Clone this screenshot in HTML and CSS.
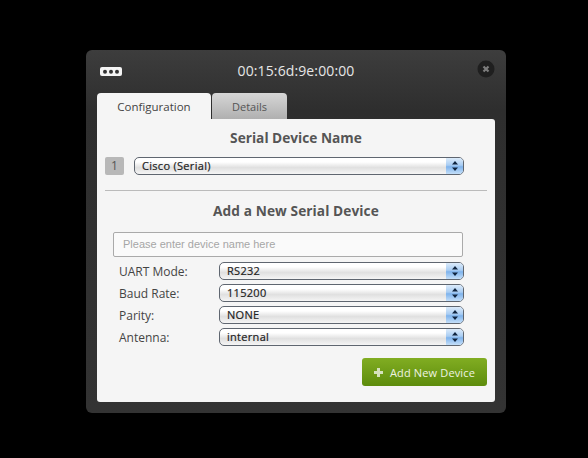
FILE: index.html
```html
<!DOCTYPE html>
<html lang="en">
<head>
<meta charset="utf-8">
<title>Serial Device</title>
<link rel="stylesheet" href="styles.css">
</head>
<body>
<div class="window">
  <header class="titlebar">
    <svg class="dots" width="22" height="9" viewBox="0 0 22 9"><rect width="22" height="9" rx="2" fill="#f4f4f4"/><circle cx="5" cy="4.700" r="2" fill="#333"/><circle cx="11" cy="4.700" r="2" fill="#333"/><circle cx="17" cy="4.700" r="2" fill="#333"/></svg>
    <span class="title">00:15:6d:9e:00:00</span>
    <svg class="close" width="18" height="18" viewBox="0 0 18 18"><circle cx="9" cy="9" r="8.500" fill="#1f1f1f"/><path d="M6.500 6.500l5 5M11.500 6.500l-5 5" stroke="#7d7d7d" stroke-width="2.200"/></svg>
  </header>
  <nav class="tabs">
    <div class="tab active">Configuration</div>
    <div class="tab">Details</div>
  </nav>
  <main class="panel">
    <h2 class="heading">Serial Device Name</h2>
    <div class="device-row">
      <span class="badge">1</span>
      <div class="select wide"><span>Cisco (Serial)</span><i class="stepper"><svg width="6" height="10" viewBox="0 0 6 10"><path d="M3 0 6 3.500H0zM3 10 0 6.500h6z" fill="#10253f"/></svg></i></div>
    </div>
    <hr class="rule">
    <h2 class="heading second">Add a New Serial Device</h2>
    <div class="name-input">Please enter device name here</div>
    <div class="fields">
      <div class="field"><label>UART Mode:</label><div class="select"><span>RS232</span><i class="stepper"><svg width="6" height="10" viewBox="0 0 6 10"><path d="M3 0 6 3.500H0zM3 10 0 6.500h6z" fill="#10253f"/></svg></i></div></div>
      <div class="field"><label>Baud Rate:</label><div class="select"><span>115200</span><i class="stepper"><svg width="6" height="10" viewBox="0 0 6 10"><path d="M3 0 6 3.500H0zM3 10 0 6.500h6z" fill="#10253f"/></svg></i></div></div>
      <div class="field"><label>Parity:</label><div class="select"><span>NONE</span><i class="stepper"><svg width="6" height="10" viewBox="0 0 6 10"><path d="M3 0 6 3.500H0zM3 10 0 6.500h6z" fill="#10253f"/></svg></i></div></div>
      <div class="field"><label>Antenna:</label><div class="select"><span>internal</span><i class="stepper"><svg width="6" height="10" viewBox="0 0 6 10"><path d="M3 0 6 3.500H0zM3 10 0 6.500h6z" fill="#10253f"/></svg></i></div></div>
    </div>
    <div class="actions">
      <button class="add-btn"><svg width="9" height="9" viewBox="0 0 9 9"><path d="M3 0h3v3h3v3H6v3H3V6H0V3h3z" fill="#d5e2bd"/></svg>Add New Device</button>
    </div>
  </main>
</div>
</body>
</html>
```
FILE: styles.css
```css
* { box-sizing: border-box; }
html, body { margin: 0; height: 100%; }
body {
  background: #000;
  font-family: "Open Sans", "Noto Sans", sans-serif;
  padding: 50px 82px 0 86px;
}
.window {
  width: 420px;
  height: 363px;
  padding: 0 11px 11px;
  border-radius: 6px;
  background: linear-gradient(#3d3d3d 0, #2e2e2e 60px, #333 100%);
  display: flex;
  flex-direction: column;
}
.titlebar {
  height: 43px;
  flex: none;
  display: flex;
  align-items: center;
  justify-content: space-between;
  padding: 0 1px 2px 3px;
}
.dots { flex: none; margin-top: 1px; }
.title {
  color: #e6e6e6;
  font-size: 14px;
  letter-spacing: 0.120px;
  margin-right: 7px;
}
.close { flex: none; margin-top: -4px; margin-right: -1px; }
.tabs {
  display: flex;
  gap: 1px;
  height: 26px;
  flex: none;
}
.tab {
  width: 75px;
  border-radius: 4px 4px 0 0;
  background: linear-gradient(#d6d6d6, #b0b0b0);
  color: #555;
  font-size: 11px;
  font-weight: 500;
  display: flex;
  align-items: center;
  justify-content: center;
}
.tab.active {
  width: 114px;
  background: #f5f5f5;
  color: #444;
  font-size: 11.500px;
  font-weight: 400;
}
.panel {
  flex: 1;
  background: #f5f5f5;
  border-radius: 0 3px 3px 3px;
  padding: 9px 8px 0;
  display: flex;
  flex-direction: column;
}
.heading {
  margin: 0;
  text-align: center;
  color: #555;
  font-size: 13.700px;
  font-weight: 700;
  line-height: 20px;
}
.heading.second {
  margin-top: 10px;
  letter-spacing: 0.080px;
}
.device-row {
  display: flex;
  align-items: center;
  margin-top: 9px;
  gap: 10px;
}
.badge {
  width: 19px;
  height: 18px;
  border-radius: 2px;
  background: #b8b8b8;
  color: #555;
  font-size: 12px;
  text-align: center;
  line-height: 18px;
}
.select {
  height: 18px;
  width: 245px;
  border: 1px solid #5f6670;
  border-bottom-width: 1.500px;
  border-radius: 5px;
  background: linear-gradient(#fff 0, #fff 25%, #e0e0e0 60%, #f5f5f5 100%);
  display: flex;
  align-items: center;
  justify-content: space-between;
  color: #222;
  font-size: 11px;
  font-weight: 400;
  letter-spacing: 0.300px;
  -webkit-text-stroke: 0.200px #222;
  padding-left: 7px;
  overflow: hidden;
}
.select span { margin-top: -2px; }
.select.wide { width: 330px; }
.stepper {
  width: 17px;
  height: 100%;
  flex: none;
  background: linear-gradient(#dcebfa 0, #a9cdf3 45%, #7fb3ec 55%, #c4dff9 100%);
  display: flex;
  align-items: center;
  justify-content: center;
}
.rule {
  width: 382px;
  margin: 15px 0 0;
  border: 0;
  border-top: 1px solid #bbb;
  align-self: center;
}
.name-input {
  margin: 11px 0 0 8px;
  width: 350px;
  height: 25px;
  border: 1px solid #aaa;
  border-radius: 2px;
  background: #fafafa;
  color: #a6a6a6;
  font-family: "Liberation Sans", Arial, sans-serif;
  font-size: 11px;
  line-height: 23px;
  padding-left: 9px;
}
.fields {
  margin: 5px 0 0 14px;
  display: flex;
  flex-direction: column;
  gap: 4px;
}
.field {
  display: flex;
  align-items: center;
  height: 18px;
}
.field label {
  width: 100px;
  color: #444;
  font-size: 12px;
}
.actions {
  display: flex;
  justify-content: flex-end;
  margin-top: 12px;
}
.add-btn {
  width: 125px;
  height: 28px;
  border: 0;
  border-radius: 3px;
  background: linear-gradient(#81ad22, #5d8c0c);
  color: #eef3e2;
  font-family: inherit;
  font-size: 11px;
  font-weight: 500;
  letter-spacing: 0.150px;
  display: flex;
  align-items: center;
  justify-content: center;
  gap: 7px;
  padding: 0;
}
```
